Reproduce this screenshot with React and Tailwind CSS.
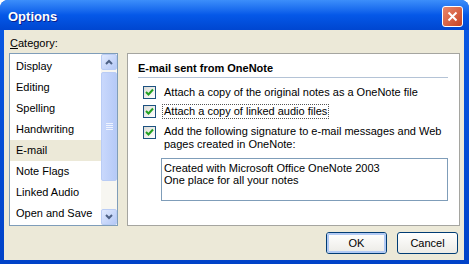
import React from 'react';

const categories = [
  'Display',
  'Editing',
  'Spelling',
  'Handwriting',
  'E-mail',
  'Note Flags',
  'Linked Audio',
  'Open and Save',
];

// XP style checked checkbox
const CheckBox = () => (
  <span className="w-[13px] h-[13px] shrink-0 border border-[#1C5180] bg-linear-to-br from-[#DCDCD7] to-white flex items-center justify-center">
    <svg width="9" height="9" viewBox="0 0 9 9">
      <path d="M1 4 L3.5 6.5 L8 1.5" fill="none" stroke="#21A121" strokeWidth="2" />
    </svg>
  </span>
);

const ScrollArrow = ({ up }) => (
  <div className="h-[16px] w-[16px] rounded-[2px] border border-[#B9CCF5] bg-linear-to-br from-[#E1EAFE] to-[#B4C8F6] flex items-center justify-center">
    <svg width="8" height="6" viewBox="0 0 8 6">
      <path d={up ? 'M1 5 L4 2 L7 5' : 'M1 1 L4 4 L7 1'} fill="none" stroke="#4D6185" strokeWidth="2" />
    </svg>
  </div>
);

const XpButton = ({ label, focused }) => (
  <div className="w-[61px] h-[22px] rounded-[3px] border border-[#003C74] bg-linear-to-b from-white to-[#ECEBE6] flex items-center justify-center">
    <div className={`w-full h-full rounded-[2px] flex items-center justify-center ${focused ? 'border-2 border-[#B2CAF4]' : ''}`}>
      <span className="text-[11px] text-black">{label}</span>
    </div>
  </div>
);

export default function App() {
  return (
    <div className="w-[469px] h-[264px] bg-white" style={{ fontFamily: '"Liberation Sans", Arial, sans-serif' }}>
      <div className="w-full h-full flex flex-col rounded-t-[8px] overflow-hidden bg-linear-to-b from-[#0A5AE6] to-[#0042C8]">
        {/* title bar */}
        <div className="h-[30px] shrink-0 flex items-center justify-between pl-[8px] pr-[6px] bg-linear-to-b from-[#3C8EFA] via-[#0558E8] to-[#0046D0]">
          <span className="text-white font-bold text-[13px] mt-[3px] [text-shadow:1px_1px_0_#0A1E8C]">Options</span>
          <div className="w-[21px] h-[21px] mt-[2px] rounded-[3px] border border-white bg-linear-to-br from-[#E8866A] to-[#C8411E] flex items-center justify-center">
            <svg width="11" height="11" viewBox="0 0 11 11">
              <path d="M1.5 1.5 L9.5 9.5 M9.5 1.5 L1.5 9.5" stroke="white" strokeWidth="2" />
            </svg>
          </div>
        </div>

        {/* body */}
        <div className="flex-1 ml-[4px] mr-[5px] mb-[4px] bg-[#ECE9D8] flex flex-col pl-[5px] pr-[4px]">
          <div className="h-[23px] flex items-center pt-[4px] pl-[1px]">
            <span className="text-[11px] text-black">
              <span className="underline">C</span>ategory:
            </span>
          </div>

          <div className="flex gap-[9px] h-[173px]">
            {/* category list */}
            <div className="w-[109px] border border-[#7F9DB9] bg-white flex">
              <div className="flex-1 flex flex-col pt-[2px]">
                {categories.map((c) => (
                  <div
                    key={c}
                    className={`h-[21px] flex items-center pl-[6px] text-[11px] text-black ${c === 'E-mail' ? 'bg-[#ECE9D8]' : ''}`}
                  >
                    {c}
                  </div>
                ))}
              </div>
              <div className="w-[16px] bg-[#F7F6F1] flex flex-col">
                <ScrollArrow up />
                <div className="h-[109px] mt-[2px] rounded-[2px] border border-[#B9CCF5] bg-linear-to-r from-[#C9D8FC] to-[#B6CAF7] flex items-center justify-center">
                  <div className="flex flex-col gap-[1px]">
                    <div className="w-[7px] h-px bg-[#EEF3FE]" />
                    <div className="w-[7px] h-px bg-[#EEF3FE]" />
                    <div className="w-[7px] h-px bg-[#EEF3FE]" />
                    <div className="w-[7px] h-px bg-[#EEF3FE]" />
                  </div>
                </div>
                <div className="flex-1" />
                <ScrollArrow />
              </div>
            </div>

            {/* settings panel */}
            <div className="flex-1 border border-[#A5A5A0] bg-white flex flex-col pl-[10px] pr-[11px]">
              <div className="h-[24px] flex items-end border-b border-[#B4C3D6] pb-[1px]">
                <span className="text-[11px] font-bold text-black">E-mail sent from OneNote</span>
              </div>

              <div className="flex flex-col pl-[5px] mt-[6px]">
                <div className="flex items-center gap-[8px] h-[17px]">
                  <CheckBox />
                  <span className="text-[11px] text-black">Attach a copy of the original notes as a OneNote file</span>
                </div>
                <div className="flex items-center gap-[6px] h-[19px] mt-[1px]">
                  <CheckBox />
                  <span className="text-[11px] text-black border border-dotted border-[#555] px-[1px] leading-[13px]">
                    Attach a copy of linked audio files
                  </span>
                </div>
                <div className="flex items-start gap-[8px] mt-[3px]">
                  <div className="pt-[2px]">
                    <CheckBox />
                  </div>
                  <span className="text-[11px] text-black leading-[13px] pt-[1px]">
                    Add the following signature to e-mail messages and Web
                    <br />
                    pages created in OneNote:
                  </span>
                </div>
                <div className="ml-[18px] mt-[7px] h-[43px] border border-[#7F9DB9] px-[2px] pt-[3px]">
                  <div className="text-[11px] text-black leading-[12px]">
                    Created with Microsoft Office OneNote 2003
                    <br />
                    One place for all your notes
                  </div>
                </div>
              </div>
            </div>
          </div>

          {/* buttons */}
          <div className="flex justify-end gap-[10px] mt-[6px] pr-[2px]">
            <XpButton label="OK" focused />
            <XpButton label="Cancel" />
          </div>
        </div>
      </div>
    </div>
  );
}
